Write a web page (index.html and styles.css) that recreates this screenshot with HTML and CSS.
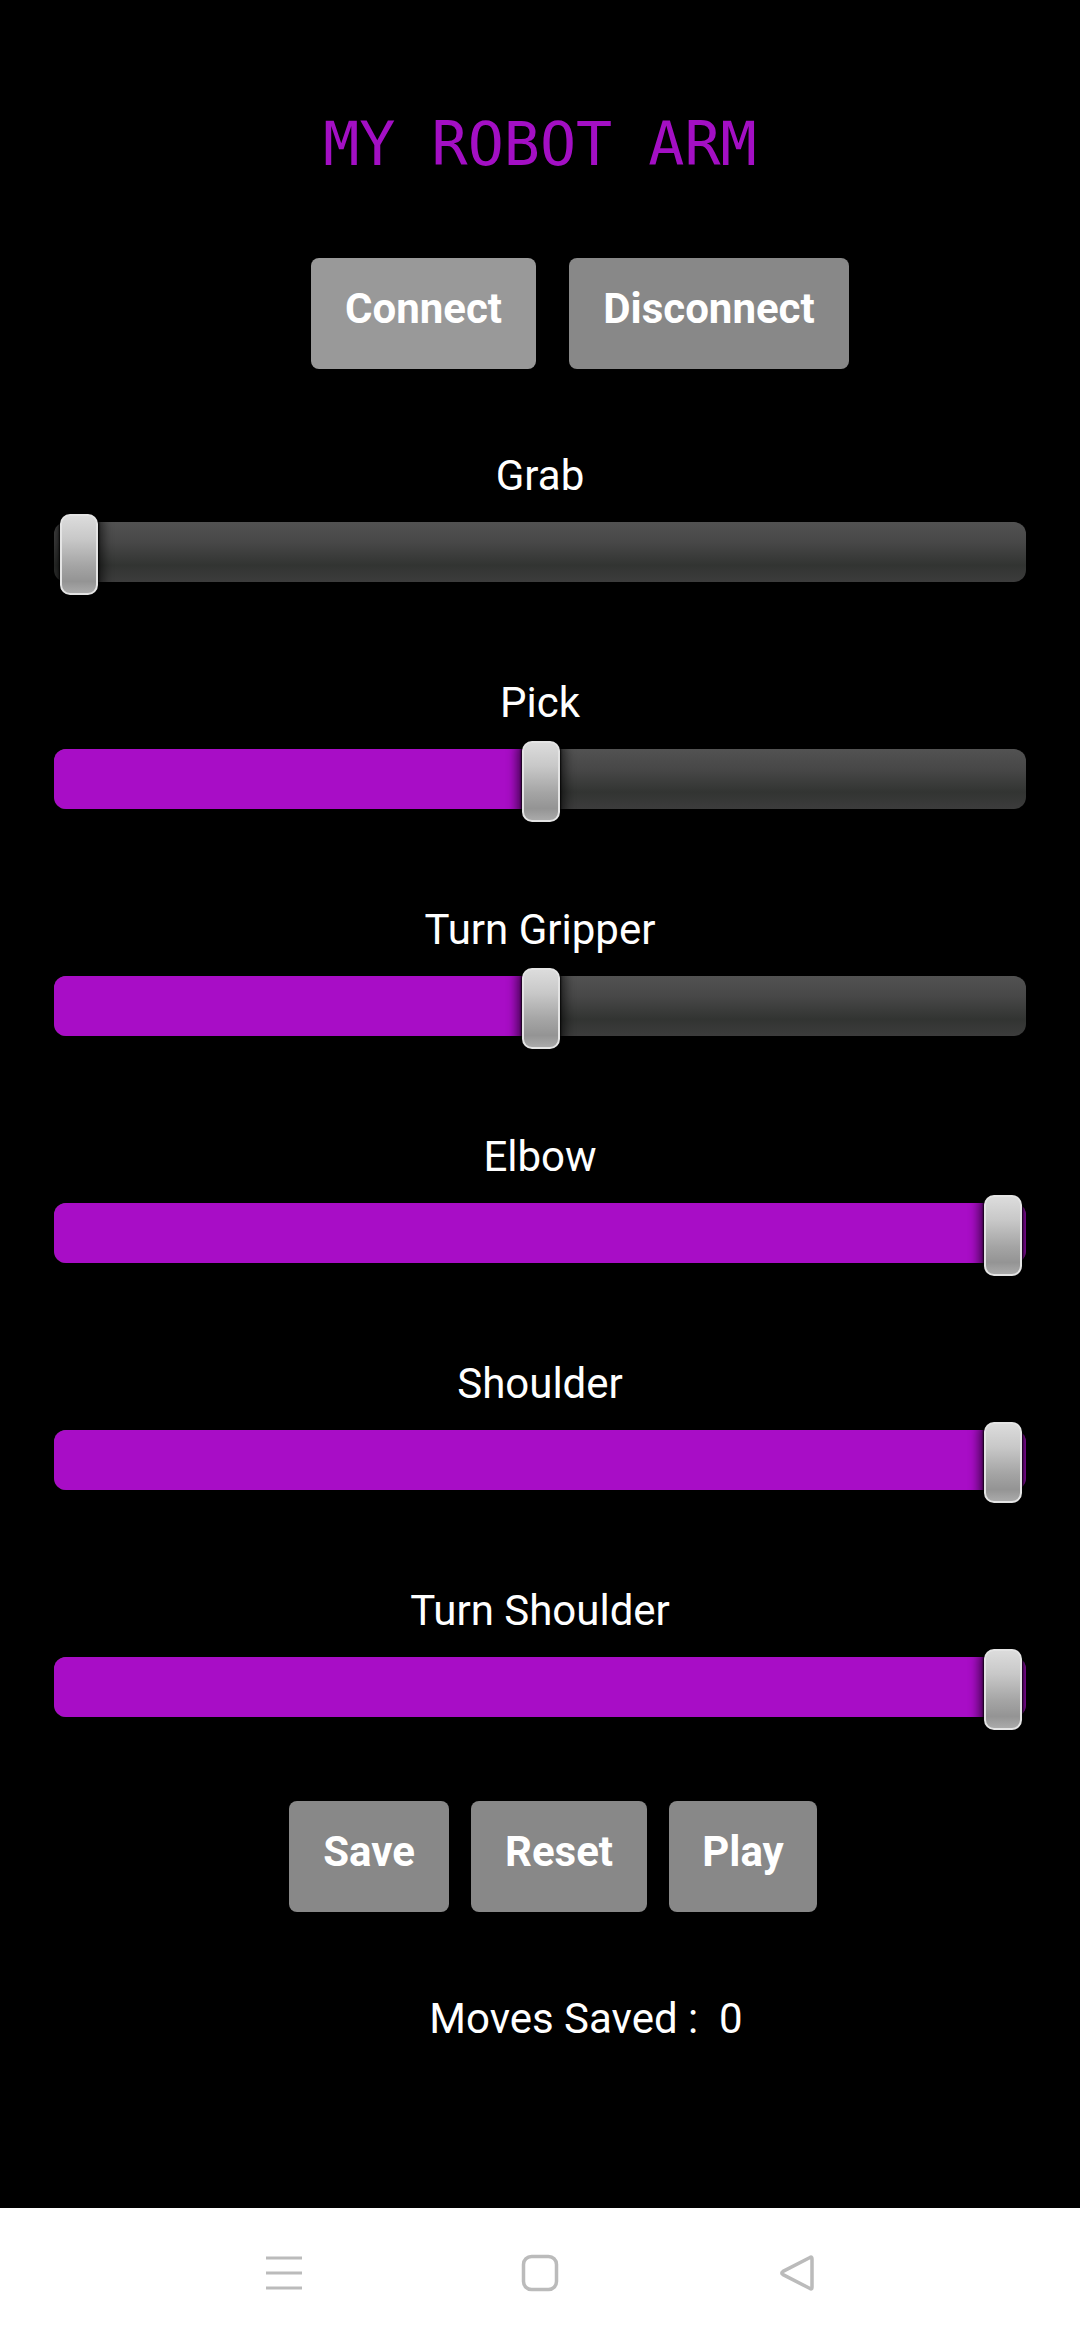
FILE: index.html
```html
<!DOCTYPE html>
<html lang="en">
<head>
<meta charset="utf-8">
<title>My Robot Arm</title>
<link rel="stylesheet" href="styles.css">
</head>
<body>
<main class="app">
  <h1 class="title">MY ROBOT ARM</h1>
  <div class="btn-row btn-row-top">
    <button class="btn btn-connect">Connect</button>
    <button class="btn btn-disconnect">Disconnect</button>
  </div>
  <section class="sliders">
    <div class="ctrl">
      <div class="label">Grab</div>
      <div class="slider"><div class="fill" style="width:0%"></div><div class="thumb" style="left:6px"></div></div>
    </div>
    <div class="ctrl">
      <div class="label">Pick</div>
      <div class="slider"><div class="fill" style="width:50%"></div><div class="thumb" style="left:468px"></div></div>
    </div>
    <div class="ctrl">
      <div class="label">Turn Gripper</div>
      <div class="slider"><div class="fill" style="width:50%"></div><div class="thumb" style="left:468px"></div></div>
    </div>
    <div class="ctrl">
      <div class="label">Elbow</div>
      <div class="slider"><div class="fill" style="width:100%"></div><div class="thumb" style="left:930px"></div></div>
    </div>
    <div class="ctrl">
      <div class="label">Shoulder</div>
      <div class="slider"><div class="fill" style="width:100%"></div><div class="thumb" style="left:930px"></div></div>
    </div>
    <div class="ctrl">
      <div class="label">Turn Shoulder</div>
      <div class="slider"><div class="fill" style="width:100%"></div><div class="thumb" style="left:930px"></div></div>
    </div>
  </section>
  <div class="btn-row btn-row-bottom">
    <button class="btn btn-save">Save</button>
    <button class="btn btn-reset">Reset</button>
    <button class="btn btn-play">Play</button>
  </div>
  <p class="moves">Moves Saved :&nbsp; 0</p>
</main>
<nav class="navbar">
  <span class="nav-icon">
    <svg width="40" height="40" viewBox="0 0 40 40"><g stroke="#bbbbbb" stroke-width="3" fill="none"><line x1="2" y1="5" x2="38" y2="5"/><line x1="2" y1="20" x2="38" y2="20"/><line x1="2" y1="35" x2="38" y2="35"/></g></svg>
  </span>
  <span class="nav-icon">
    <svg width="40" height="40" viewBox="0 0 40 40"><rect x="3.5" y="3.5" width="33" height="33" rx="8" ry="8" stroke="#bbbbbb" stroke-width="3.5" fill="none"/></svg>
  </span>
  <span class="nav-icon">
    <svg width="40" height="42" viewBox="0 0 40 42"><path d="M34 5.5 Q36 4.2 36 6.8 L36 35.2 Q36 37.8 34 36.5 L7 22.6 Q4.6 21 7 19.4 Z" stroke="#bbbbbb" stroke-width="3.5" stroke-linejoin="round" fill="none"/></svg>
  </span>
</nav>
</body>
</html>
```

FILE: styles.css
```css
* { box-sizing: border-box; }

html, body {
  margin: 0;
  padding: 0;
  background: #000;
}

body {
  width: 1080px;
  font-family: Roboto, "Noto Sans", Arial, sans-serif;
  color: #fff;
}

.app {
  height: 2208px;
  background: #000;
  padding-top: 108px;
  display: flex;
  flex-direction: column;
  align-items: center;
}

.title {
  margin: 0;
  font-family: "DejaVu Sans Mono", "Liberation Mono", monospace;
  font-weight: normal;
  font-size: 60px;
  line-height: 72px;
  color: #a30fc4;
  white-space: pre;
}

.btn-row {
  display: flex;
  justify-content: center;
}

.btn-row-top {
  margin-top: 78px;
  gap: 33px;
  padding-left: 80px;
}

.btn-row-bottom {
  margin-top: 84px;
  gap: 22px;
  padding-left: 26px;
}

.btn {
  height: 111px;
  border: none;
  border-radius: 8px;
  background: #888888;
  color: #fff;
  font-family: Roboto, "Noto Sans", Arial, sans-serif;
  font-weight: 700;
  font-size: 42px;
  padding: 0 0 10px;
  display: flex;
  align-items: center;
  justify-content: center;
}

.btn-connect { background: #999999; width: 225px; }
.btn-disconnect { width: 280px; }
.btn-save { width: 160px; }
.btn-reset { width: 176px; }
.btn-play { width: 148px; }

.sliders {
  margin-top: 83px;
  display: flex;
  flex-direction: column;
  gap: 97px;
}

.ctrl {
  width: 972px;
  display: flex;
  flex-direction: column;
  align-items: center;
}

.label {
  font-size: 42px;
  line-height: 48px;
  height: 48px;
  color: #fff;
  margin-bottom: 22px;
}

.slider {
  position: relative;
  width: 972px;
  height: 60px;
  border-radius: 12px;
  background: linear-gradient(#525252 0%, #474747 35%, #323432 72%, #3c3c3c 100%);
}

.fill {
  height: 100%;
  border-radius: 12px;
  background: #a80dc6;
}

.thumb {
  position: absolute;
  top: -8px;
  width: 38px;
  height: 81px;
  border-radius: 10px;
  border: 2px solid #e4e4e4;
  background: linear-gradient(#dcdcdc 0%, #c8c8c8 30%, #a4a4a4 65%, #949494 85%, #aaaaaa 100%);
  box-shadow: 0 0 2px 1px rgba(0, 0, 0, 0.85), 6px 0 10px rgba(0, 0, 0, 0.5), -6px 0 10px rgba(0, 0, 0, 0.5);
}

.moves {
  margin: 82px 0 0;
  padding-left: 92px;
  font-size: 42px;
  line-height: 50px;
  color: #fff;
}

.navbar {
  height: 132px;
  background: #fff;
  display: flex;
  justify-content: center;
  align-items: center;
  gap: 216px;
  padding-bottom: 2px;
}

.nav-icon {
  width: 40px;
  height: 42px;
  display: flex;
  align-items: center;
  justify-content: center;
}

.nav-icon svg { display: block; }
```
